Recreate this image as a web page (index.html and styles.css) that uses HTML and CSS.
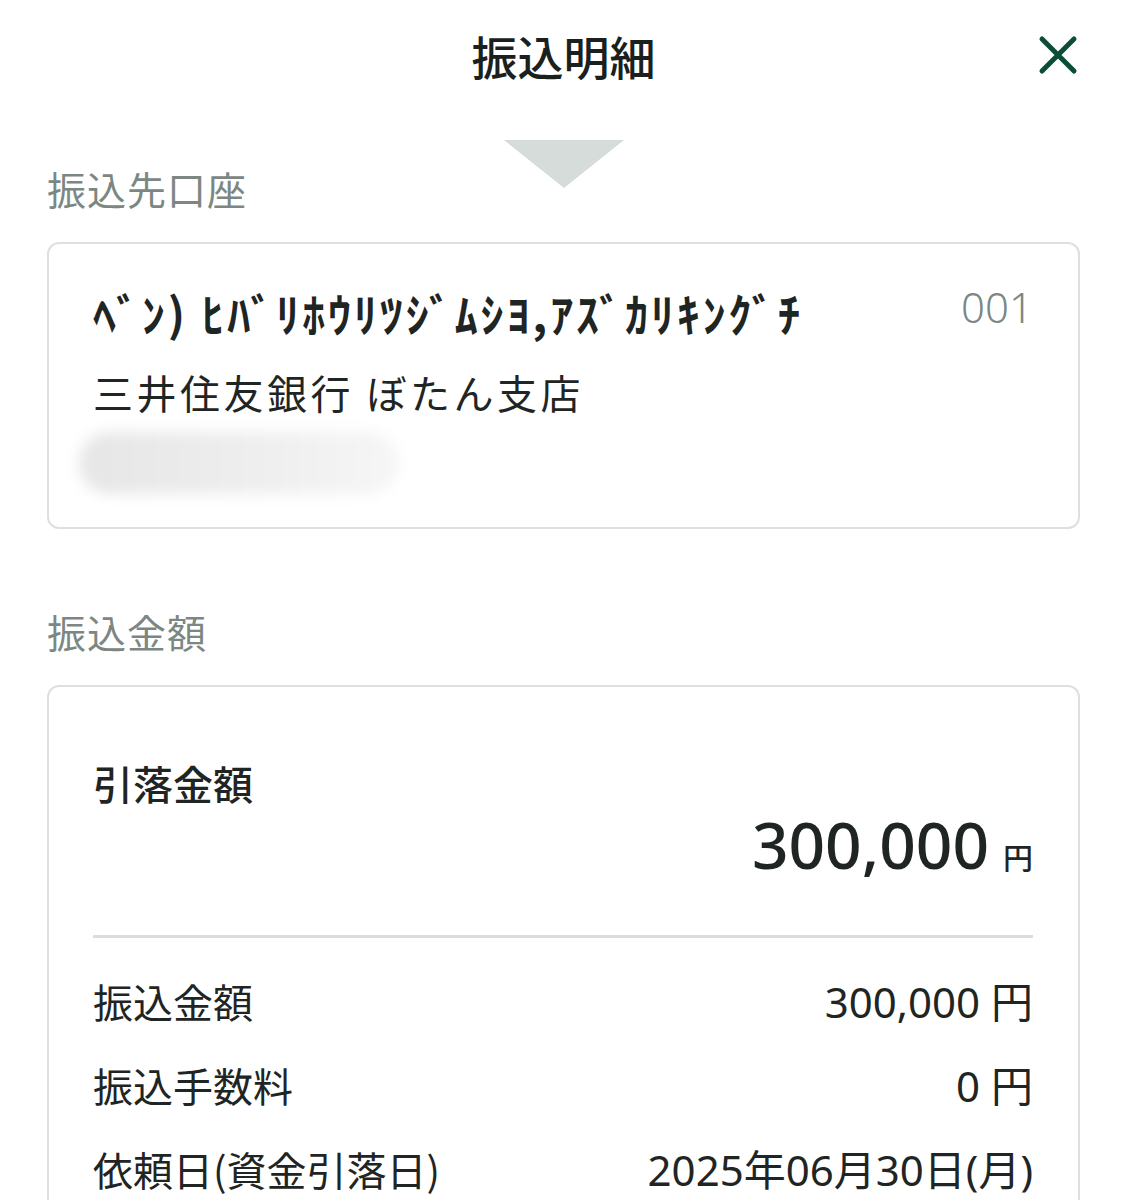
FILE: index.html
```html
<!DOCTYPE html>
<html lang="ja">
<head>
  <meta charset="UTF-8">
  <meta name="viewport" content="width=device-width, initial-scale=1.0">
  <title>振込明細</title>
  <link rel="stylesheet" href="styles.css">
</head>
<body>

<!-- ヘッダー -->
<header class="header">
  <h1 class="header-title">振込明細</h1>
  <button class="close-btn" aria-label="閉じる">
    <svg viewBox="0 0 40 40" width="40" height="40">
      <path d="M4 4 L36 36 M36 4 L4 36" stroke="#0b4d38" stroke-width="5" stroke-linecap="round" fill="none"/>
    </svg>
  </button>
</header>

<!-- 振込先口座 -->
<section class="block">
  <div class="block-head with-arrow">
    <span class="arrow"></span>
    <h2 class="block-label">振込先口座</h2>
  </div>
  <div class="card account">
    <div class="account-top">
      <p class="account-name">ﾍﾞﾝ) ﾋﾊﾞﾘﾎｳﾘﾂｼﾞﾑｼﾖ,ｱｽﾞｶﾘｷﾝｸﾞﾁ</p>
      <span class="account-code">001</span>
    </div>
    <p class="account-bank">三井住友銀行 ぼたん支店</p>
    <div class="account-hidden"></div>
  </div>
</section>

<!-- 振込金額 -->
<section class="block">
  <div class="block-head">
    <h2 class="block-label">振込金額</h2>
  </div>
  <div class="card amount">
    <p class="amount-title">引落金額</p>
    <p class="amount-total"><span class="num">300,000</span><span class="yen">円</span></p>
    <hr class="divider">
    <div class="row">
      <span>振込金額</span>
      <span class="row-value">300,000 円</span>
    </div>
    <div class="row">
      <span>振込手数料</span>
      <span class="row-value">0 円</span>
    </div>
    <div class="row">
      <span>依頼日(資金引落日)</span>
      <span class="row-value">2025年06月30日(月)</span>
    </div>
  </div>
</section>

</body>
</html>
```

FILE: styles.css
```css
/* 共通 */
body {
  font-family: "Noto Sans CJK JP", "Noto Sans", sans-serif;
  margin: 0;
  padding: 0 47px;
  background-color: #ffffff;
  color: #1f2523;
}

p, h1, h2 {
  margin: 0;
}

/* ヘッダー */
.header {
  height: 110px;
  display: grid;
  grid-template-columns: 1fr auto 1fr;
  align-items: center;
}

.header-title {
  grid-column: 2;
  font-size: 46px;
  font-weight: 500;
  line-height: 1;
  color: #1b1f1e;
}

.close-btn {
  grid-column: 3;
  justify-self: end;
  margin-right: 2px;
  padding: 0;
  border: none;
  background: none;
  display: flex;
  cursor: pointer;
}

/* セクション見出し */
.block-head {
  display: grid;
  height: 156px;
}

.block-head > * {
  grid-area: 1 / 1;
}

.with-arrow {
  padding-top: 30px;
  height: 102px;
}

.arrow {
  justify-self: center;
  align-self: start;
  width: 0;
  height: 0;
  border-left: 60px solid transparent;
  border-right: 60px solid transparent;
  border-top: 48px solid #d5dcda;
}

.block-label {
  align-self: end;
  font-size: 39px;
  font-weight: 400;
  line-height: 1;
  letter-spacing: 1px;
  color: #7c8784;
  padding-bottom: 34px;
}

/* カード */
.card {
  border: 2px solid #dce1df;
  border-radius: 12px;
  padding: 0 45px 0 44px;
}

/* 振込先口座 */
.account {
  box-sizing: border-box;
  height: 287px;
  padding-top: 38px;
}

.account-top {
  display: flex;
  justify-content: space-between;
  align-items: flex-start;
}

.account-name {
  font-size: 46px;
  font-weight: 700;
  line-height: 60px;
  letter-spacing: 2.9px;
}

.account-code {
  font-family: "Noto Sans", sans-serif;
  font-size: 42px;
  font-weight: 300;
  line-height: 50px;
  color: #7c8784;
}

.account-bank {
  font-size: 40px;
  line-height: 60px;
  letter-spacing: 3.5px;
  margin-top: 20px;
}

.account-hidden {
  width: 320px;
  height: 62px;
  margin: 10px 0 0 -14px;
  border-radius: 31px;
  background: linear-gradient(90deg, #e6e6e6, #eeeeee 55%, #f6f6f6);
  filter: blur(7px);
}

/* 振込金額 */
.amount {
  padding-top: 66px;
  padding-bottom: 40px;
  border-bottom: none;
  border-radius: 12px 12px 0 0;
}

.amount-title {
  font-size: 40px;
  font-weight: 500;
  line-height: 60px;
}

.amount-total {
  display: flex;
  justify-content: flex-end;
  align-items: baseline;
  gap: 14px;
  margin-top: -8px;
}

.amount-total .num {
  font-family: "Noto Sans", sans-serif;
  font-size: 64px;
  font-weight: 500;
  line-height: 80px;
}

.amount-total .yen {
  font-size: 30px;
  font-weight: 500;
}

.divider {
  border: none;
  height: 3px;
  background-color: #d8dedc;
  margin: 50px 0 21px;
}

.row {
  display: flex;
  justify-content: space-between;
  align-items: baseline;
  height: 84px;
  font-size: 40px;
  line-height: 84px;
}

.row-value {
  font-family: "Noto Sans", "Noto Sans CJK JP", sans-serif;
  font-size: 42px;
  font-weight: 400;
}
```
